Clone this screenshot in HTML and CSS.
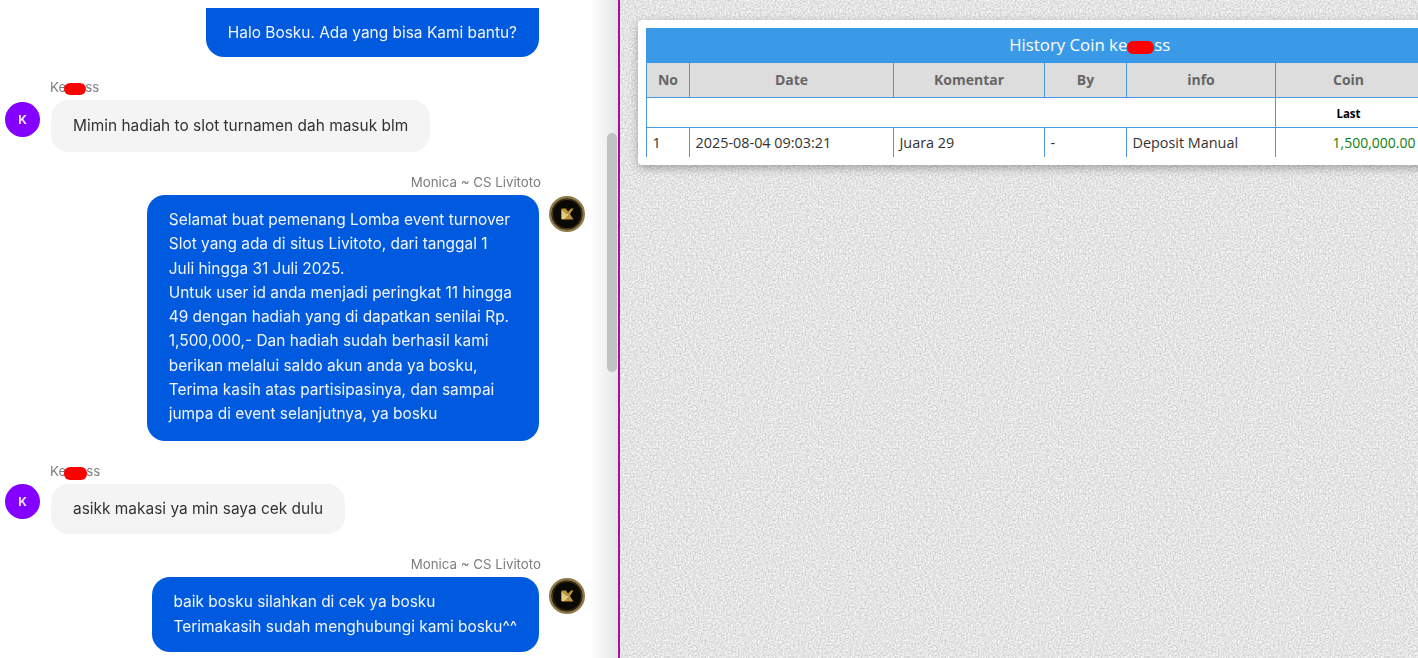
FILE: index.html
```html
<!DOCTYPE html>
<html lang="id">
<head>
<meta charset="utf-8">
<title>History Coin</title>
<link rel="stylesheet" href="styles.css">
</head>
<body>
<main class="page">
  <section class="chat">
    <div class="chat-flow">
      <div class="bubble out first">Halo Bosku. Ada yang bisa Kami bantu?</div>

      <div class="group">
        <div class="name in-name">Ke<span class="red"></span>ss</div>
        <div class="row">
          <div class="avatar-k">K</div>
          <div class="bubble in tall">Mimin hadiah to slot turnamen dah masuk blm</div>
        </div>
      </div>

      <div class="group">
        <div class="name out-name">Monica ~ CS Livitoto</div>
        <div class="row row-out">
          <div class="bubble out big">Selamat buat pemenang Lomba event turnover<br>Slot yang ada di situs Livitoto, dari tanggal 1<br>Juli hingga 31 Juli 2025.<br>Untuk user id anda menjadi peringkat 11 hingga<br>49 dengan hadiah yang di dapatkan senilai Rp.<br>1,500,000,- Dan hadiah sudah berhasil kami<br>berikan melalui saldo akun anda ya bosku,<br>Terima kasih atas partisipasinya, dan sampai<br>jumpa di event selanjutnya, ya bosku</div>
          <svg class="avatar-cs" viewBox="0 0 36 36" aria-hidden="true"><circle cx="18" cy="18" r="16.750" fill="#0b0906" stroke="#8f7a4a" stroke-width="2.500"/><circle cx="18" cy="18" r="14.750" fill="none" stroke="#4f3d18" stroke-width="1"/><path d="M12.500 12.500h4.500l2 3 3-3h2.500l-3.500 5.500 3.500 5.500H12.500z" fill="#b8923f"/><path d="M12.500 13.500l4.500 4.500h3l-4.500 5h-3z" fill="#e6cd86"/></svg>
        </div>
      </div>

      <div class="group">
        <div class="name in-name">Ke<span class="red red-wide"></span>ss</div>
        <div class="row">
          <div class="avatar-k avatar-flush">K</div>
          <div class="bubble in">asikk makasi ya min saya cek dulu</div>
        </div>
      </div>

      <div class="group">
        <div class="name out-name">Monica ~ CS Livitoto</div>
        <div class="row row-out">
          <div class="bubble out two">baik bosku silahkan di cek ya bosku<br>Terimakasih sudah menghubungi kami bosku^^</div>
          <svg class="avatar-cs" viewBox="0 0 36 36" aria-hidden="true"><circle cx="18" cy="18" r="16.750" fill="#0b0906" stroke="#8f7a4a" stroke-width="2.500"/><circle cx="18" cy="18" r="14.750" fill="none" stroke="#4f3d18" stroke-width="1"/><path d="M12.500 12.500h4.500l2 3 3-3h2.500l-3.500 5.500 3.500 5.500H12.500z" fill="#b8923f"/><path d="M12.500 13.500l4.500 4.500h3l-4.500 5h-3z" fill="#e6cd86"/></svg>
        </div>
      </div>
    </div>
    <div class="scrollbar"></div>
  </section>

  <section class="history">
    <div class="card">
      <table class="coin-table">
        <colgroup>
          <col class="c-no"><col class="c-date"><col class="c-kom"><col class="c-by"><col class="c-info"><col class="c-coin"><col class="c-extra">
        </colgroup>
        <thead>
          <tr><th colspan="7" class="title">History Coin ke<span class="red red-title"></span>ss</th></tr>
          <tr class="heads"><th>No</th><th>Date</th><th>Komentar</th><th>By</th><th>info</th><th>Coin</th><th></th></tr>
        </thead>
        <tbody>
          <tr class="last-row"><td colspan="5"></td><td class="last">Last</td><td></td></tr>
          <tr class="data-row"><td>1</td><td>2025-08-04 09:03:21</td><td>Juara 29</td><td>-</td><td>Deposit Manual</td><td class="amount">1,500,000.00</td><td></td></tr>
        </tbody>
      </table>
    </div>
  </section>
</main>
</body>
</html>
```

FILE: styles.css
```css
* { box-sizing: border-box; }

html, body {
  margin: 0;
  height: 100%;
  overflow: hidden;
}

.page {
  display: flex;
  width: 1418px;
  height: 658px;
  overflow: hidden;
}

/* Left: chat */
.chat {
  position: relative;
  flex: 0 0 620px;
  height: 658px;
  overflow: hidden;
  background: linear-gradient(to right, #fff 0, #fff 590px, #f0f0f0 607px, #e6e6e6 618px);
  border-right: 2px solid #a50fa5;
  font-family: Inter, "Liberation Sans", sans-serif;
  font-size: 15.45px;
}

.chat-flow {
  display: flex;
  flex-direction: column;
  padding: 8px 33px 0 5px;
  filter: blur(0.4px);
}

.group { margin-top: 22px; }

.name {
  display: block;
  height: 16px;
  line-height: 16px;
  margin-bottom: 5px;
  font-size: 13.3px;
  color: #7d7d7d;
}

.in-name { padding-left: 45px; }
.out-name { padding-right: 44px; text-align: right; }

.red {
  display: inline-block;
  width: 22px;
  height: 12px;
  margin: 0 -1px -3px -2px;
  background: #f00;
  border-radius: 6px;
}

.red-wide { width: 23px; height: 13px; margin-bottom: -4px; }

.row {
  display: flex;
  align-items: flex-start;
  gap: 11px;
}

.row-out { gap: 10px; justify-content: flex-end; }

.bubble {
  line-height: 24.25px;
  padding: 13px 22px;
  border-radius: 18px;
}

.out { background: #005ae0; color: #f0f5ff; }
.in { background: #f4f4f4; color: #333; }

.first {
  align-self: flex-end;
  margin-right: 46px;
  padding: 12.5px 22px;
  border-radius: 0 0 18px 18px;
}

.tall { padding: 13.75px 22px; }
.big { padding: 13px 27px 14.5px 22px; }
.two { padding: 13.25px 22px; }

.avatar-k {
  flex: 0 0 35px;
  width: 35px;
  height: 35px;
  margin-top: 2px;
  border-radius: 50%;
  background: #8400ff;
  color: #f3e8ff;
  font-size: 12px;
  font-weight: 700;
  line-height: 35px;
  text-align: center;
}

.avatar-flush { margin-top: 0; }

.avatar-cs {
  flex: 0 0 36px;
  width: 36px;
  height: 36px;
  margin-top: 1px;
}

.scrollbar {
  position: absolute;
  top: 133px;
  left: 607px;
  width: 10px;
  height: 239px;
  border-radius: 5px;
  background: #c2c2c2;
}

/* Right: history */
.history {
  flex: 1;
  min-width: 0;
  padding: 20px 0 0 18px;
  background-color: #e3e3e3;
  background-image: url("data:image/svg+xml,%3Csvg xmlns='http://www.w3.org/2000/svg' width='240' height='240'%3E%3Cfilter id='n' color-interpolation-filters='sRGB' x='0' y='0' width='100%25' height='100%25'%3E%3CfeTurbulence type='fractalNoise' baseFrequency='0.6' numOctaves='1' seed='4' stitchTiles='stitch'/%3E%3CfeColorMatrix values='0.35 0 0 0 0.72 0.35 0 0 0 0.72 0.35 0 0 0 0.72 0 0 0 0 1'/%3E%3C/filter%3E%3Crect width='240' height='240' filter='url(%23n)'/%3E%3C/svg%3E");
  background-size: 240px 240px;
}

.card {
  width: 902px;
  height: 145px;
  padding: 8px;
  background: #fff;
  border-radius: 4px;
  box-shadow: 0 3px 10px rgba(0, 0, 0, 0.3);
}

.coin-table {
  width: 886px;
  table-layout: fixed;
  border-collapse: collapse;
  font-family: "Open Sans", "Liberation Sans", sans-serif;
  font-size: 14.4px;
  color: #333;
}

.c-no { width: 43px; }
.c-date { width: 204px; }
.c-kom { width: 151px; }
.c-by { width: 82px; }
.c-info { width: 149px; }
.c-coin { width: 146px; }
.c-extra { width: 111px; }

.title {
  height: 35px;
  padding: 0 0 3px;
  background: #3a9ae8;
  border: solid #3a9ae8;
  border-width: 0 0 0 1px;
  color: #fff;
  font-size: 16.8px;
  font-weight: 400;
}

.red-title {
  width: 27px;
  height: 13px;
  margin: 0 0 -3px;
}

.heads th {
  height: 34px;
  padding: 0 0 1px;
  background: #ddd;
  color: #666;
  font-size: 14px;
  font-weight: 700;
  border: 1px solid #4a98e0;
  border-top: 0;
}

.last-row td,
.data-row td {
  border: 1px solid #4a98e0;
  border-top: 0;
  padding: 0 5.5px;
}

.last-row td { height: 30px; }
.last-row .last { padding-top: 2px; }
.data-row td { height: 30px; border-bottom: 0; }

.last {
  color: #000;
  font-size: 11.5px;
  font-weight: 700;
  text-align: center;
}

.data-row .amount {
  color: #0f800f;
  font-size: 14px;
  text-align: right;
}
```
